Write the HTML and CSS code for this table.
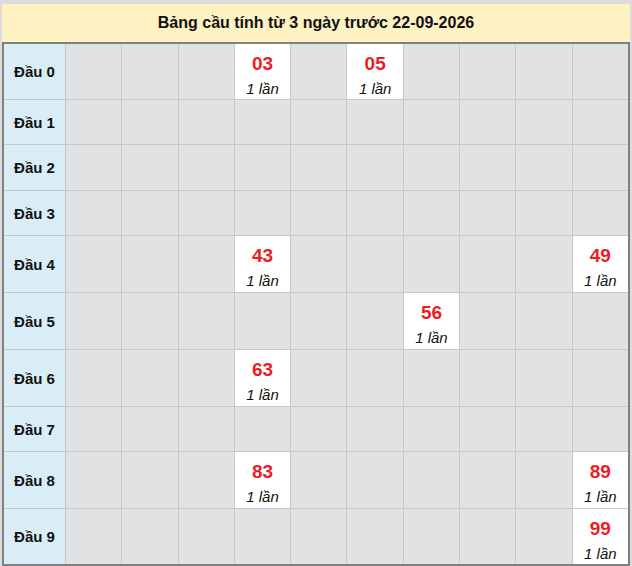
FILE: index.html
```html
<!DOCTYPE html>
<html lang="vi">
<head>
<meta charset="utf-8">
<title>Bảng cầu</title>
<link rel="stylesheet" href="styles.css">
</head>
<body>
<div class="wrap">
  <div class="title">Bảng cầu tính từ 3 ngày trước 22-09-2026</div>
  <div class="grid">
    <div class="head">Đầu 0</div>
    <div class="c"></div><div class="c"></div><div class="c"></div>
    <div class="c hit"><span class="num">03</span><span class="cnt">1 lần</span></div>
    <div class="c"></div>
    <div class="c hit"><span class="num">05</span><span class="cnt">1 lần</span></div>
    <div class="c"></div><div class="c"></div><div class="c"></div><div class="c"></div>

    <div class="head">Đầu 1</div>
    <div class="c"></div><div class="c"></div><div class="c"></div><div class="c"></div><div class="c"></div>
    <div class="c"></div><div class="c"></div><div class="c"></div><div class="c"></div><div class="c"></div>

    <div class="head">Đầu 2</div>
    <div class="c"></div><div class="c"></div><div class="c"></div><div class="c"></div><div class="c"></div>
    <div class="c"></div><div class="c"></div><div class="c"></div><div class="c"></div><div class="c"></div>

    <div class="head">Đầu 3</div>
    <div class="c"></div><div class="c"></div><div class="c"></div><div class="c"></div><div class="c"></div>
    <div class="c"></div><div class="c"></div><div class="c"></div><div class="c"></div><div class="c"></div>

    <div class="head">Đầu 4</div>
    <div class="c"></div><div class="c"></div><div class="c"></div>
    <div class="c hit"><span class="num">43</span><span class="cnt">1 lần</span></div>
    <div class="c"></div><div class="c"></div><div class="c"></div><div class="c"></div><div class="c"></div>
    <div class="c hit"><span class="num">49</span><span class="cnt">1 lần</span></div>

    <div class="head">Đầu 5</div>
    <div class="c"></div><div class="c"></div><div class="c"></div><div class="c"></div><div class="c"></div><div class="c"></div>
    <div class="c hit"><span class="num">56</span><span class="cnt">1 lần</span></div>
    <div class="c"></div><div class="c"></div><div class="c"></div>

    <div class="head">Đầu 6</div>
    <div class="c"></div><div class="c"></div><div class="c"></div>
    <div class="c hit"><span class="num">63</span><span class="cnt">1 lần</span></div>
    <div class="c"></div><div class="c"></div><div class="c"></div><div class="c"></div><div class="c"></div><div class="c"></div>

    <div class="head">Đầu 7</div>
    <div class="c"></div><div class="c"></div><div class="c"></div><div class="c"></div><div class="c"></div>
    <div class="c"></div><div class="c"></div><div class="c"></div><div class="c"></div><div class="c"></div>

    <div class="head">Đầu 8</div>
    <div class="c"></div><div class="c"></div><div class="c"></div>
    <div class="c hit"><span class="num">83</span><span class="cnt">1 lần</span></div>
    <div class="c"></div><div class="c"></div><div class="c"></div><div class="c"></div><div class="c"></div>
    <div class="c hit"><span class="num">89</span><span class="cnt">1 lần</span></div>

    <div class="head">Đầu 9</div>
    <div class="c"></div><div class="c"></div><div class="c"></div><div class="c"></div><div class="c"></div>
    <div class="c"></div><div class="c"></div><div class="c"></div><div class="c"></div>
    <div class="c hit"><span class="num">99</span><span class="cnt">1 lần</span></div>
  </div>
</div>
</body>
</html>
```

FILE: styles.css
```css
html, body {
  margin: 0;
  padding: 0;
}
body {
  background: #dcdcdc;
  padding: 4px 2px 0 2px;
  font-family: "Liberation Sans", Arial, sans-serif;
  color: #111;
}
.wrap {
  width: 628px;
}
.title {
  height: 38px;
  background: #fff2c2;
  display: flex;
  align-items: center;
  justify-content: center;
  font-weight: bold;
  font-size: 16px;
  color: #111;
}
.grid {
  display: grid;
  grid-template-columns: 61px repeat(10, 1fr);
  grid-template-rows: 55px 44px 45px 44px 56px 56px 56px 44px 56px 55px;
  gap: 1px;
  background: #c8c8c8;
  border: 2px solid #808080;
}
.head {
  background: #d9edf7;
  display: flex;
  align-items: center;
  justify-content: center;
  font-weight: bold;
  font-size: 15px;
  color: #111;
}
.c {
  background: #e1e2e4;
}
.hit {
  background: #fff;
  display: flex;
  flex-direction: column;
  align-items: center;
  padding-top: 8px;
  box-sizing: border-box;
}
.num {
  color: #ec1c24;
  font-weight: bold;
  font-size: 19px;
  line-height: 23px;
}
.cnt {
  margin-top: 5px;
  font-style: italic;
  font-size: 15px;
  line-height: 18px;
  color: #111;
}
```
